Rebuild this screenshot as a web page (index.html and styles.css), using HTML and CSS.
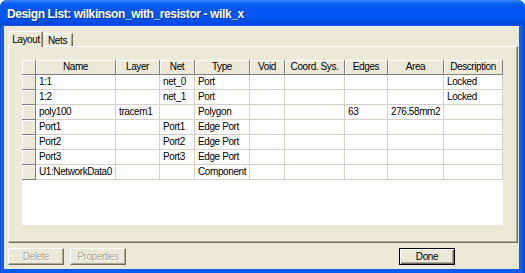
FILE: index.html
```html
<!DOCTYPE html>
<html lang="en">
<head>
  <meta charset="UTF-8" />
  <title>Design List</title>
  <link rel="stylesheet" href="styles.css">
</head>
<body>
  <div class="window">
    <div class="titlebar">Design List: wilkinson_with_resistor - wilk_x</div>
    <div class="client">
      <div class="tabs">
        <div class="tab active">Layout</div>
        <div class="tab">Nets</div>
      </div>
      <div class="panel">
        <div class="grid">
          <table>
            <colgroup>
              <col style="width:14px"><col style="width:80px"><col style="width:44px">
              <col style="width:35px"><col style="width:55px"><col style="width:35px">
              <col style="width:60px"><col style="width:43px"><col style="width:56px">
              <col style="width:59px">
            </colgroup>
            <thead>
              <tr>
                <th></th><th>Name</th><th>Layer</th><th>Net</th><th>Type</th><th>Void</th>
                <th>Coord. Sys.</th><th>Edges</th><th>Area</th><th>Description</th>
              </tr>
            </thead>
            <tbody>
              <tr><th></th><td>1:1</td><td></td><td>net_0</td><td>Port</td><td></td><td></td><td></td><td></td><td>Locked</td></tr>
              <tr><th></th><td>1:2</td><td></td><td>net_1</td><td>Port</td><td></td><td></td><td></td><td></td><td>Locked</td></tr>
              <tr><th></th><td>poly100</td><td>tracem1</td><td></td><td>Polygon</td><td></td><td></td><td>63</td><td>276.58mm2</td><td></td></tr>
              <tr><th></th><td>Port1</td><td></td><td>Port1</td><td>Edge Port</td><td></td><td></td><td></td><td></td><td></td></tr>
              <tr><th></th><td>Port2</td><td></td><td>Port2</td><td>Edge Port</td><td></td><td></td><td></td><td></td><td></td></tr>
              <tr><th></th><td>Port3</td><td></td><td>Port3</td><td>Edge Port</td><td></td><td></td><td></td><td></td><td></td></tr>
              <tr><th></th><td>U1:NetworkData0</td><td></td><td></td><td>Component</td><td></td><td></td><td></td><td></td><td></td></tr>
            </tbody>
          </table>
        </div>
      </div>
      <div class="buttons">
        <button class="btn" disabled>Delete</button>
        <button class="btn props" disabled>Properties</button>
        <button class="btn done">Done</button>
      </div>
    </div>
  </div>
</body>
</html>
```

FILE: styles.css
```css
body {
  margin: 0;
  background: #ffffff;
  font-family: "Liberation Sans", Arial, sans-serif;
  font-size: 10px;
  letter-spacing: -0.4px;
}

.window {
  width: 525px;
  height: 273px;
  background: linear-gradient(90deg, #0831d9 0, #166aee 1px, #0a5bf0 3px, #0a5bf0 519px, #1462ee 521px, #0a3fd2 525px);
  border-radius: 7px 7px 0 0;
  display: flex;
  flex-direction: column;
  overflow: hidden;
}

.titlebar {
  height: 25px;
  flex: none;
  padding-left: 7px;
  line-height: 28px;
  color: #ffffff;
  font-weight: bold;
  font-size: 12px;
  letter-spacing: -0.4px;
  white-space: nowrap;
  background: linear-gradient(#3d8cff 0, #2d7ffd 1px, #0a62f6 3px, #0458f0 6px, #0255ef 18px, #0049e0 24px, #0a3cc8 25px);
  text-shadow: 1px 1px #0a2e9c;
}

.client {
  flex: 1;
  margin: 1px 6px 4px 4px;
  background: #ece9d8;
  display: flex;
  flex-direction: column;
}

.tabs {
  display: flex;
  align-items: flex-end;
  height: 20px;
  padding-left: 5px;
}

.tab {
  box-sizing: border-box;
  width: 30px;
  height: 13px;
  line-height: 13px;
  text-align: center;
  background: #ece9d8;
  border-top: 1px solid #ffffff;
  border-right: 1px solid #716f64;
  box-shadow: inset -1px 0 #aca899;
  color: #000000;
}

.tab.active {
  width: 34px;
  height: 16px;
  line-height: 15px;
  border-left: 1px solid #ffffff;
  margin-bottom: -1px;
  position: relative;
  z-index: 1;
}

.panel {
  margin-left: 4px;
  padding: 13px;
  box-sizing: border-box;
  width: 510px;
  height: 197px;
  border: 1px solid;
  border-color: #ffffff #716f64 #716f64 #ffffff;
  box-shadow: inset -1px -1px #aca899;
}

.grid {
  width: 481px;
  height: 165px;
  background: #ffffff;
}

table {
  border-collapse: separate;
  border-spacing: 0;
  table-layout: fixed;
  width: 481px;
}

th, td {
  height: 14px;
  padding: 0 2px;
  white-space: nowrap;
  overflow: hidden;
  font-weight: normal;
  line-height: 14px;
}

th {
  background: #ece9d8;
  border-right: 1px solid #808080;
  border-bottom: 1px solid #808080;
  box-shadow: inset 1px 1px #ffffff;
  text-align: center;
}

td {
  padding-left: 3px;
  border-right: 1px solid #d4d0c8;
  border-bottom: 1px solid #d4d0c8;
  text-align: left;
}

.buttons {
  display: flex;
  margin-top: 5px;
  padding-left: 4px;
}

.btn {
  width: 56px;
  height: 17px;
  padding: 0;
  margin: 0;
  font-family: "Liberation Sans", Arial, sans-serif;
  font-size: 10px;
  letter-spacing: -0.4px;
  background: #ece9d8;
  border: 1px solid;
  border-color: #ffffff #716f64 #716f64 #ffffff;
  box-shadow: inset -1px -1px #aca899;
  color: #000000;
}

.btn:disabled {
  color: #aca899;
  text-shadow: 1px 1px #ffffff;
}

.props {
  margin-left: 6px;
}

.done {
  margin-left: auto;
  margin-right: 64px;
  border: 1px solid #000000;
  box-shadow: inset 1px 1px #ffffff, inset -1px -1px #716f64, inset -2px -2px #aca899;
}
```
